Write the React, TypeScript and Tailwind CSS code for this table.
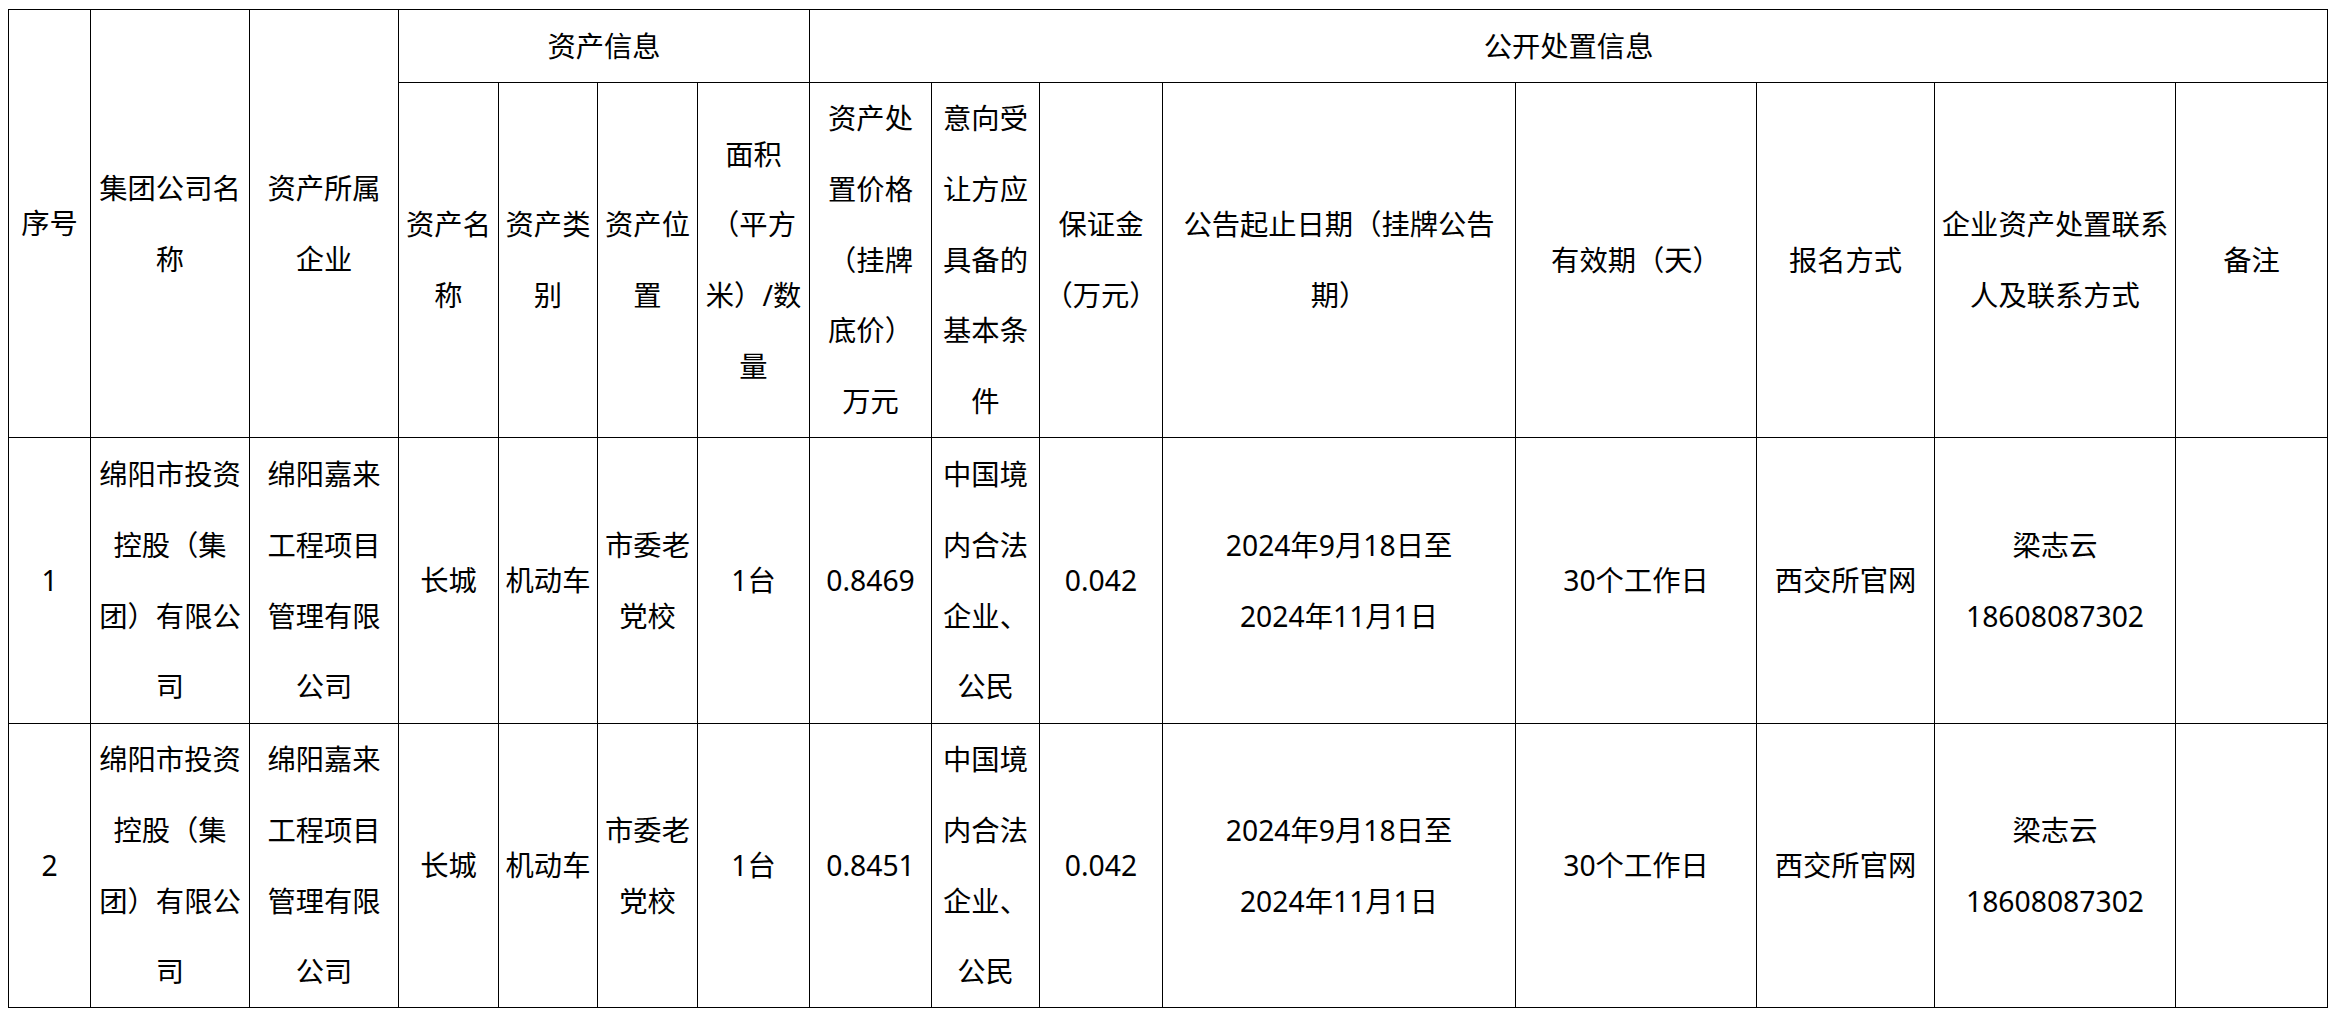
const cols = [82, 159, 149, 100, 99, 100, 112, 122, 108, 123, 353, 241, 178, 241, 152];

const colClass = [
  "w-[82px]",
  "w-[159px]",
  "w-[149px]",
  "w-[100px]",
  "w-[99px]",
  "w-[100px]",
  "w-[112px]",
  "w-[122px]",
  "w-[108px]",
  "w-[123px]",
  "w-[353px]",
  "w-[241px]",
  "w-[178px]",
  "w-[241px]",
  "w-[152px]",
];

const td = "border border-black p-0 text-center align-middle";

// each entry is one line as it wraps in the source document
const Lines = ({ lines }: { lines: string[] }) => (
  <>
    {lines.map((l, i) => (
      <div key={i} className="whitespace-nowrap leading-[70.7px]">
        {l}
      </div>
    ))}
  </>
);

interface Row {
  no: string;
  price: string;
}

const rows: Row[] = [
  { no: "1", price: "0.8469" },
  { no: "2", price: "0.8451" },
];

const DataRow = ({ row, h }: { row: Row; h: string }) => (
  <tr className={h}>
    <td className={td}><Lines lines={[row.no]} /></td>
    <td className={td}><Lines lines={["绵阳市投资", "控股（集", "团）有限公", "司"]} /></td>
    <td className={td}><Lines lines={["绵阳嘉来", "工程项目", "管理有限", "公司"]} /></td>
    <td className={td}><Lines lines={["长城"]} /></td>
    <td className={td}><Lines lines={["机动车"]} /></td>
    <td className={td}><Lines lines={["市委老", "党校"]} /></td>
    <td className={td}><Lines lines={["1台"]} /></td>
    <td className={td}><Lines lines={[row.price]} /></td>
    <td className={td}><Lines lines={["中国境", "内合法", "企业、", "公民"]} /></td>
    <td className={td}><Lines lines={["0.042"]} /></td>
    <td className={td}><Lines lines={["2024年9月18日至", "2024年11月1日"]} /></td>
    <td className={td}><Lines lines={["30个工作日"]} /></td>
    <td className={td}><Lines lines={["西交所官网"]} /></td>
    <td className={td}><Lines lines={["梁志云", "18608087302"]} /></td>
    <td className={td}></td>
  </tr>
);

export default function App() {
  return (
    <div className="min-h-screen w-[2334px] bg-white pl-[8px] pt-[9px] font-['Noto_Sans','Noto_Sans_CJK_SC',sans-serif] text-[28.3px] text-black">
      <table className="table-fixed border-collapse border border-black w-[2319px]">
        <colgroup>
          {cols.map((_, i) => (
            <col key={i} className={colClass[i]} />
          ))}
        </colgroup>
        <tbody>
          <tr className="h-[73px]">
            <td rowSpan={2} className={td}><Lines lines={["序号"]} /></td>
            <td rowSpan={2} className={td}><Lines lines={["集团公司名", "称"]} /></td>
            <td rowSpan={2} className={td}><Lines lines={["资产所属", "企业"]} /></td>
            <td colSpan={4} className={td}><Lines lines={["资产信息"]} /></td>
            <td colSpan={8} className={td}><Lines lines={["公开处置信息"]} /></td>
          </tr>
          <tr className="h-[355px]">
            <td className={td}><Lines lines={["资产名", "称"]} /></td>
            <td className={td}><Lines lines={["资产类", "别"]} /></td>
            <td className={td}><Lines lines={["资产位", "置"]} /></td>
            <td className={td}><Lines lines={["面积", "（平方", "米）/数", "量"]} /></td>
            <td className={td}><Lines lines={["资产处", "置价格", "（挂牌", "底价）", "万元"]} /></td>
            <td className={td}><Lines lines={["意向受", "让方应", "具备的", "基本条", "件"]} /></td>
            <td className={td}><Lines lines={["保证金", "（万元）"]} /></td>
            <td className={td}><Lines lines={["公告起止日期（挂牌公告", "期）"]} /></td>
            <td className={td}><Lines lines={["有效期（天）"]} /></td>
            <td className={td}><Lines lines={["报名方式"]} /></td>
            <td className={td}><Lines lines={["企业资产处置联系", "人及联系方式"]} /></td>
            <td className={td}><Lines lines={["备注"]} /></td>
          </tr>
          <DataRow row={rows[0]} h="h-[286px]" />
          <DataRow row={rows[1]} h="h-[284px]" />
        </tbody>
      </table>
    </div>
  );
}
